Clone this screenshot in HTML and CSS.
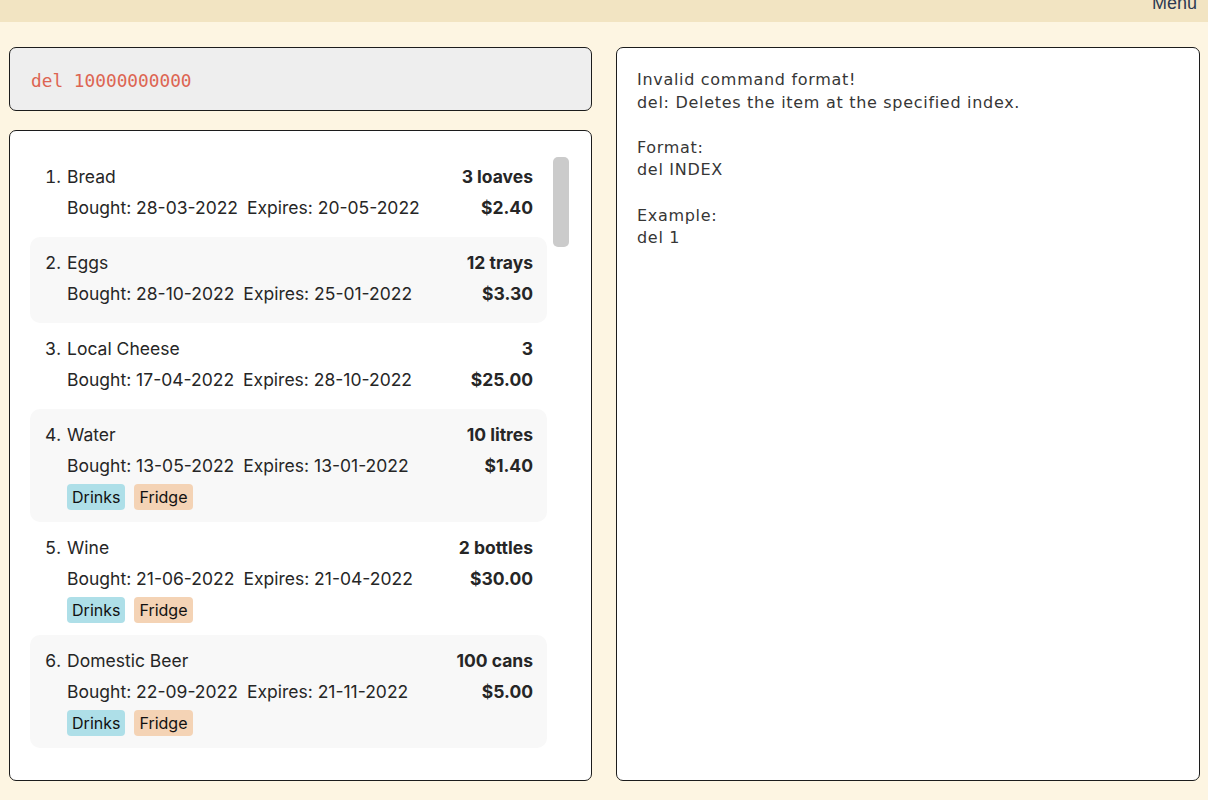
FILE: index.html
```html
<!DOCTYPE html>
<html>
<head>
<meta charset="utf-8">
<link rel="stylesheet" href="styles.css">
</head>
<body>
<div class="menubar"><span class="menu">Menu</span></div>
<div class="main">
  <div class="left">
    <div class="command"><span class="cmd-text">del 10000000000</span></div>
    <div class="list-panel">
      <div class="list">
        <div class="item">
          <span class="num">1.</span>
          <div class="body">
            <div class="row"><span class="name">Bread</span><span class="qty">3 loaves</span></div>
            <div class="row details"><span class="dates"><span>Bought: 28-03-2022</span><span>Expires: 20-05-2022</span></span><span class="price">$2.40</span></div>
          </div>
        </div>
        <div class="item alt">
          <span class="num">2.</span>
          <div class="body">
            <div class="row"><span class="name">Eggs</span><span class="qty">12 trays</span></div>
            <div class="row details"><span class="dates"><span>Bought: 28-10-2022</span><span>Expires: 25-01-2022</span></span><span class="price">$3.30</span></div>
          </div>
        </div>
        <div class="item">
          <span class="num">3.</span>
          <div class="body">
            <div class="row"><span class="name">Local Cheese</span><span class="qty">3</span></div>
            <div class="row details"><span class="dates"><span>Bought: 17-04-2022</span><span>Expires: 28-10-2022</span></span><span class="price">$25.00</span></div>
          </div>
        </div>
        <div class="item alt">
          <span class="num">4.</span>
          <div class="body">
            <div class="row"><span class="name">Water</span><span class="qty">10 litres</span></div>
            <div class="row details"><span class="dates"><span>Bought: 13-05-2022</span><span>Expires: 13-01-2022</span></span><span class="price">$1.40</span></div>
            <div class="tags"><span class="tag drinks">Drinks</span><span class="tag fridge">Fridge</span></div>
          </div>
        </div>
        <div class="item">
          <span class="num">5.</span>
          <div class="body">
            <div class="row"><span class="name">Wine</span><span class="qty">2 bottles</span></div>
            <div class="row details"><span class="dates"><span>Bought: 21-06-2022</span><span>Expires: 21-04-2022</span></span><span class="price">$30.00</span></div>
            <div class="tags"><span class="tag drinks">Drinks</span><span class="tag fridge">Fridge</span></div>
          </div>
        </div>
        <div class="item alt">
          <span class="num">6.</span>
          <div class="body">
            <div class="row"><span class="name">Domestic Beer</span><span class="qty">100 cans</span></div>
            <div class="row details"><span class="dates"><span>Bought: 22-09-2022</span><span>Expires: 21-11-2022</span></span><span class="price">$5.00</span></div>
            <div class="tags"><span class="tag drinks">Drinks</span><span class="tag fridge">Fridge</span></div>
          </div>
        </div>
      </div>
      <div class="scrollbar"><div class="thumb"></div></div>
    </div>
  </div>
  <div class="result">
    <p>Invalid command format!<br>del: Deletes the item at the specified index.</p>
    <p>Format:<br>del INDEX</p>
    <p>Example:<br>del 1</p>
  </div>
</div>
</body>
</html>
```
FILE: styles.css
```css
html, body {
  margin: 0;
  padding: 0;
}
body {
  background: #fdf5e2;
  width: 1208px;
  height: 800px;
  overflow: hidden;
  font-family: "Inter", "Roboto", sans-serif;
}
.menubar {
  height: 22px;
  background: #f2e4c2;
  display: flex;
  justify-content: flex-end;
  overflow: hidden;
}
.menu {
  font-family: "Liberation Sans", Arial, sans-serif;
  font-size: 18px;
  color: #2d3a52;
  line-height: 20px;
  margin-top: -7px;
  margin-right: 11px;
}
.main {
  display: flex;
  gap: 24px;
  padding: 25px 8px 0 9px;
  height: 734px;
}
.left {
  width: 583px;
  display: flex;
  flex-direction: column;
  gap: 19px;
}
.command {
  height: 64px;
  box-sizing: border-box;
  background: #eeeeee;
  border: 1.5px solid #1c1c1c;
  border-radius: 7px;
  display: flex;
  align-items: center;
  padding-left: 21px;
}
.cmd-text {
  font-family: "DejaVu Sans Mono", monospace;
  font-size: 17.8px;
  color: #dd6552;
  margin-top: 2px;
}
.list-panel {
  flex: 1;
  box-sizing: border-box;
  background: #ffffff;
  border: 1.5px solid #1c1c1c;
  border-radius: 7px;
  display: flex;
  padding: 20px 21px 0 20px;
  gap: 5px;
}
.list {
  width: 517px;
  display: flex;
  flex-direction: column;
}
.item {
  display: flex;
  padding: 14px 14px 12px 15px;
  border-radius: 10px;
  color: #262626;
  font-size: 17.5px;
}
.item.alt {
  background: #f8f8f8;
}
.num {
  flex: none;
  height: 24px;
  line-height: 24px;
  margin-right: 6px;
  font-variant-numeric: tabular-nums;
}
.body {
  flex: 1;
  display: flex;
  flex-direction: column;
}
.row {
  display: flex;
  align-items: center;
  height: 24px;
  line-height: 24px;
}
.name {
  flex: 1;
}
.qty, .price {
  font-weight: 700;
}
.details {
  margin-top: 7px;
  margin-bottom: 5px;
}
.dates {
  flex: 1;
  display: flex;
  gap: 9px;
}
.tags {
  margin-top: 1px;
  display: flex;
  gap: 9px;
}
.tag {
  height: 26px;
  line-height: 26px;
  padding: 0 5px;
  border-radius: 4px;
  color: #111;
  font-size: 16px;
}
.tag.drinks {
  background: #aedfe8;
}
.tag.fridge {
  background: #f4d3b5;
}
.scrollbar {
  width: 16px;
  padding-top: 6px;
  margin-left: 1px;
}
.thumb {
  height: 90px;
  background: #cbcbcb;
  border-radius: 5px;
}
.result {
  width: 584px;
  box-sizing: border-box;
  background: #ffffff;
  border: 1.5px solid #1c1c1c;
  border-radius: 7px;
  padding: 21px 20px;
  font-family: "DejaVu Sans", sans-serif;
  font-size: 16px;
  letter-spacing: 0.7px;
  line-height: 22.6px;
  color: #363636;
}
.result p {
  margin: 0 0 22.6px 0;
}
```
